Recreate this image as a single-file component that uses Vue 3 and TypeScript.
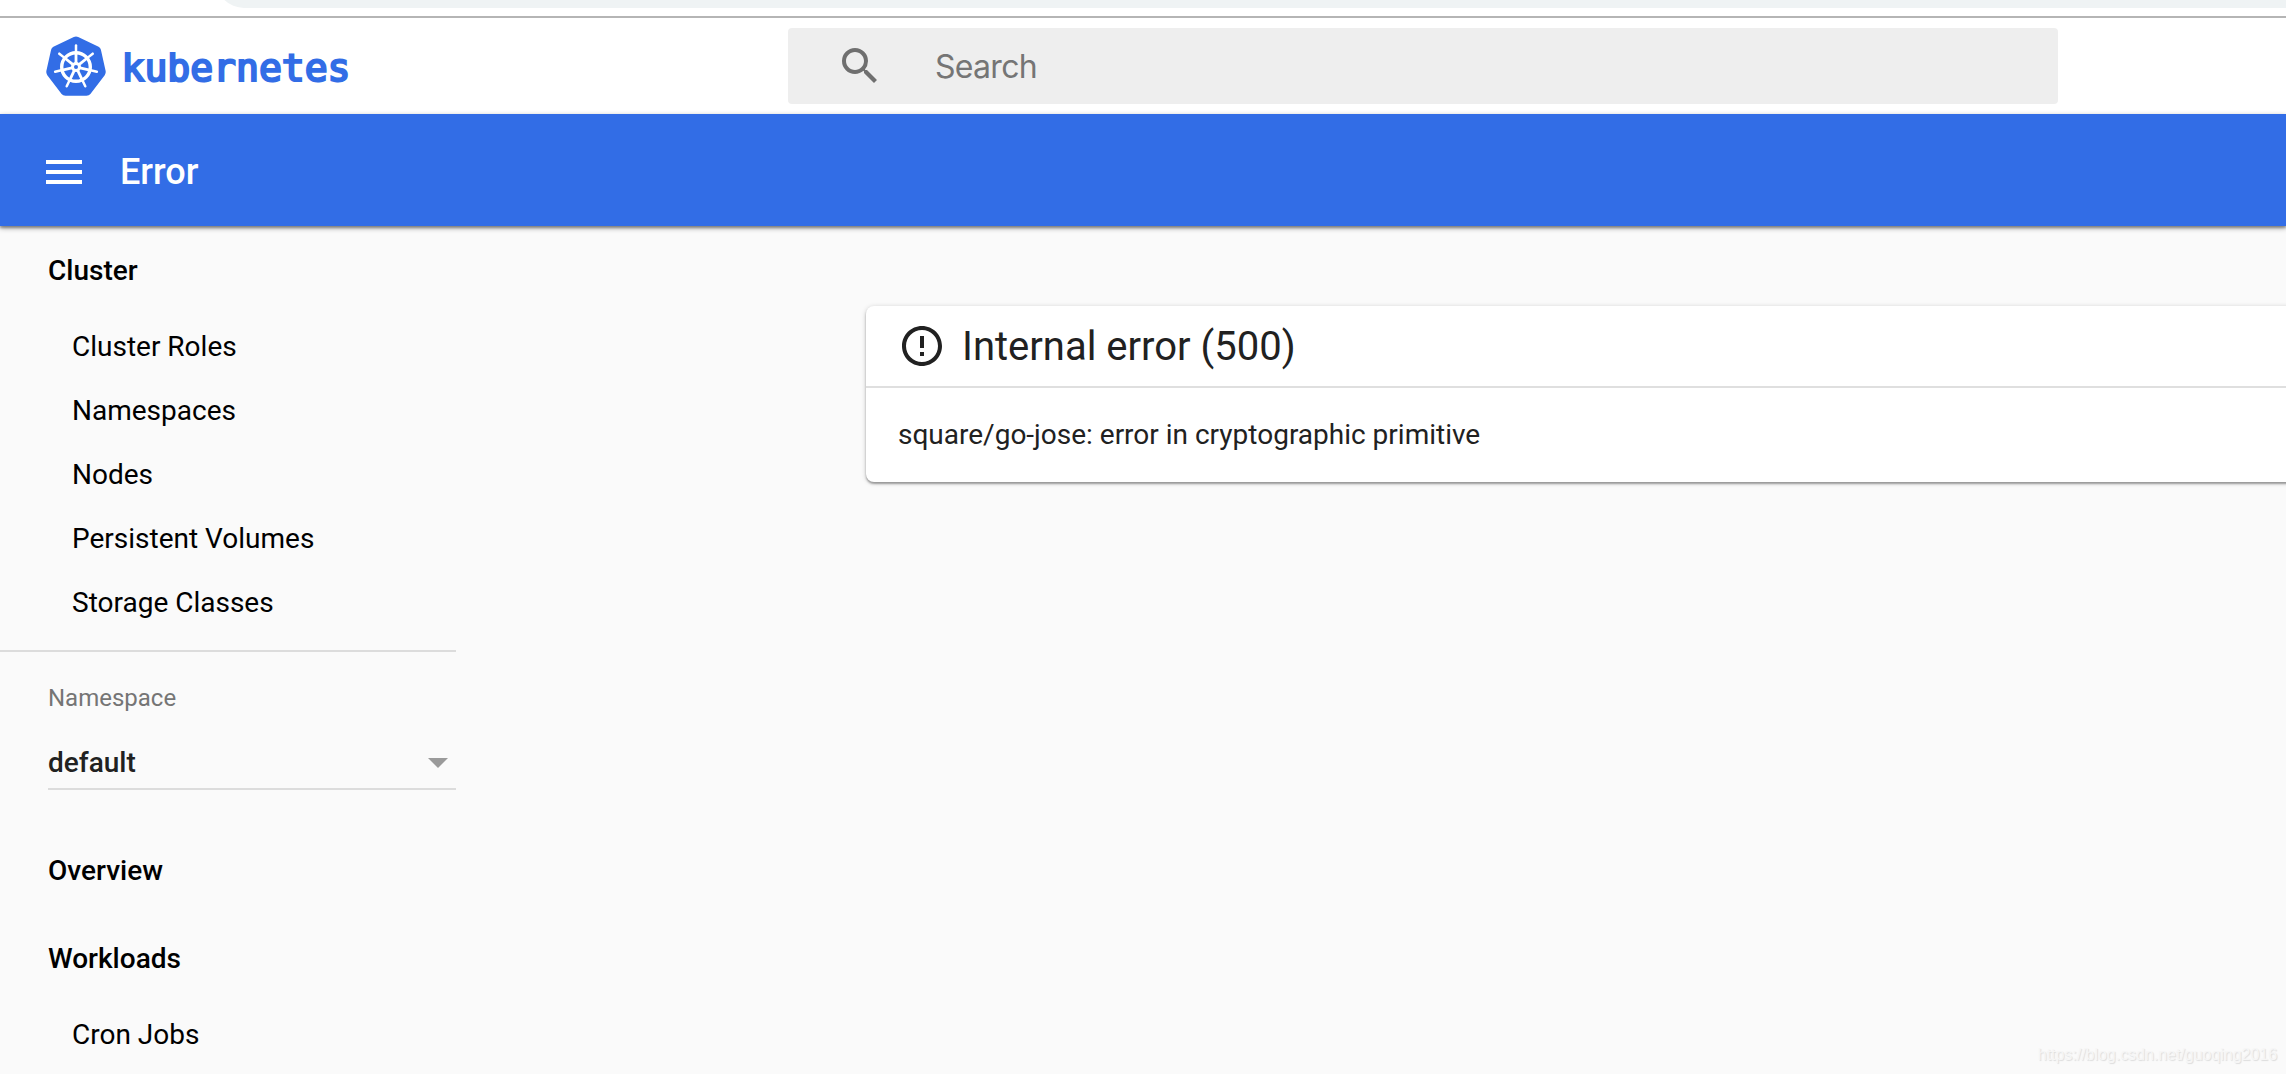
<script setup lang="ts">
import { ref } from "vue";

interface NavGroup {
  title: string;
  items: string[];
}

const clusterNav: NavGroup = {
  title: "Cluster",
  items: ["Cluster Roles", "Namespaces", "Nodes", "Persistent Volumes", "Storage Classes"],
};

const namespaceNav: NavGroup[] = [
  { title: "Overview", items: [] },
  { title: "Workloads", items: ["Cron Jobs"] },
];

const namespace = ref("default");
const query = ref("");

// the wheel has seven evenly spaced handles
const spokes = Array.from({ length: 7 }, (_, i) => (i * 360) / 7);
</script>

<template>
  <div class="page">
    <div class="browser-strip">
      <div class="omnibox"></div>
    </div>

    <header class="header">
      <a class="brand">
        <svg class="brand-mark" viewBox="0 0 60 60">
          <path
            class="mark-body"
            d="M27.8 0.9Q30 0 32.2 0.9L52.6 10.7Q54.4 11.7 54.9 13.8L59.7 35.3Q60 37.5 58.7 39.2L44.4 58Q43 59.8 40.5 59.8H19.5Q17 59.8 15.6 58L1.3 39.2Q0 37.5 0.3 35.3L5.1 13.8Q5.6 11.7 7.4 10.7Z"
          />
          <g transform="translate(30 31)">
            <circle class="mark-ring" r="14.3" />
            <g v-for="angle in spokes" :key="angle" :transform="`rotate(${angle})`">
              <path class="mark-spoke" d="M0 -3V-14" />
              <path class="mark-handle" d="M0 -15V-21.4" />
            </g>
            <circle class="mark-hub" r="5" />
            <circle class="mark-body" r="2" />
          </g>
        </svg>
        <svg class="brand-name" viewBox="0 0 230 50">
          <text x="-0.5" y="39.6" textLength="229" lengthAdjust="spacingAndGlyphs">kubernetes</text>
        </svg>
      </a>
      <div class="search">
        <svg class="icon" viewBox="0 0 24 24">
          <path
            d="M15.5 14h-.79l-.28-.27A6.471 6.471 0 0 0 16 9.5 6.5 6.5 0 1 0 9.5 16c1.61 0 3.09-.59 4.23-1.57l.27.28v.79l5 4.99L20.49 19l-4.99-5zm-6 0C7.01 14 5 11.99 5 9.5S7.01 5 9.5 5 14 7.01 14 9.5 11.99 14 9.5 14z"
          />
        </svg>
        <input v-model="query" class="search-input" type="text" placeholder="Search" />
      </div>
    </header>

    <div class="toolbar">
      <svg class="icon" viewBox="0 0 24 24">
        <path d="M3 18h18v-2H3v2zm0-5h18v-2H3v2zm0-7v2h18V6H3z" />
      </svg>
      <h1 class="toolbar-title">Error</h1>
    </div>

    <div class="body">
      <nav class="sidebar">
        <div class="group">
          <div class="group-title">{{ clusterNav.title }}</div>
          <a v-for="item in clusterNav.items" :key="item" class="nav-item">{{ item }}</a>
        </div>

        <div class="namespace">
          <label class="namespace-label">Namespace</label>
          <div class="select">
            <span>{{ namespace }}</span>
            <span class="select-arrow"></span>
          </div>
        </div>

        <div v-for="group in namespaceNav" :key="group.title" class="group">
          <div class="group-title">{{ group.title }}</div>
          <a v-for="item in group.items" :key="item" class="nav-item">{{ item }}</a>
        </div>
      </nav>

      <main class="content">
        <section class="card">
          <div class="card-header">
            <svg class="icon" viewBox="0 0 24 24">
              <path
                d="M11 15h2v2h-2zm0-8h2v6h-2zm.99-5C6.47 2 2 6.48 2 12s4.47 10 9.99 10C17.52 22 22 17.52 22 12S17.52 2 11.99 2zM12 20c-4.42 0-8-3.58-8-8s3.58-8 8-8 8 3.58 8 8-3.58 8-8 8z"
              />
            </svg>
            <h2 class="card-title">Internal error (500)</h2>
          </div>
          <p class="card-message">square/go-jose: error in cryptographic primitive</p>
        </section>
      </main>
    </div>

    <div class="watermark">https://blog.csdn.net/guoqing2016</div>
  </div>
</template>

<style>
body {
  margin: 0;
  overflow: hidden;
}
</style>

<style scoped>
.page {
  position: relative;
  display: flex;
  flex-direction: column;
  height: 1074px;
  overflow: hidden;
  background: #fafafa;
  color: #212121;
  font-family: Roboto, sans-serif;
  font-size: 28px;
}

.icon {
  flex: none;
  width: 48px;
  height: 48px;
  fill: currentColor;
}

.browser-strip {
  flex: none;
  box-sizing: border-box;
  height: 18px;
  padding-left: 216px;
  border-bottom: 2px solid #b5b5b5;
  background: #fff;
  overflow: hidden;
}

.omnibox {
  height: 48px;
  margin-top: -40px;
  border-bottom-left-radius: 28px;
  background: #eff3f4;
}

.header {
  flex: none;
  display: flex;
  align-items: center;
  height: 96px;
  background: #fff;
}

.brand {
  display: flex;
  align-items: center;
  width: 742px;
  padding-left: 46px;
}

.brand-mark {
  width: 60px;
  height: 60px;
}

.brand-name {
  width: 230px;
  height: 50px;
  margin-left: 16px;
  overflow: visible;
}

.brand-name text {
  fill: #326de6;
  stroke: #326de6;
  stroke-width: 2.2px;
  font-family: "DejaVu Sans Mono", monospace;
  font-size: 38px;
}

.mark-body {
  fill: #326de6;
}

.mark-ring {
  fill: none;
  stroke: #fff;
  stroke-width: 3.4px;
}

.mark-spoke,
.mark-handle {
  stroke: #fff;
  stroke-width: 2.8px;
}

.mark-handle {
  stroke-width: 2.5px;
  stroke-linecap: round;
}

.mark-hub {
  fill: #fff;
}

.search {
  display: flex;
  align-items: center;
  box-sizing: border-box;
  width: 1270px;
  height: 76px;
  padding-left: 48px;
  border-radius: 4px;
  background: #eee;
  color: #6f6f6f;
}

.search-input {
  flex: 1;
  margin-left: 51px;
  padding: 0;
  border: none;
  outline: none;
  background: none;
  font-family: Inter, sans-serif;
  font-size: 32px;
  letter-spacing: -0.7px;
}

.search-input::placeholder {
  color: #757575;
  opacity: 1;
}

.toolbar {
  flex: none;
  display: flex;
  align-items: center;
  height: 112px;
  padding: 4px 40px 0;
  box-sizing: border-box;
  gap: 32px;
  background: #326de6;
  box-shadow: 0 2px 5px rgba(0, 0, 0, 0.4), 0 2px 2px rgba(0, 0, 0, 0.25);
  color: #fff;
}

.toolbar-title {
  margin: 0;
  font-size: 36px;
  font-weight: 500;
}

.body {
  flex: 1;
  display: flex;
  min-height: 0;
}

.sidebar {
  flex: none;
  width: 456px;
  color: #000;
}

.group-title {
  height: 88px;
  padding-left: 48px;
  line-height: 90px;
  font-weight: 500;
}

.nav-item {
  display: block;
  height: 64px;
  padding-left: 72px;
  line-height: 66px;
}

.namespace {
  margin-bottom: 36px;
  margin-top: 16px;
  padding: 32px 0 0 48px;
  border-top: 2px solid #dcdcdc;
}

.namespace-label {
  display: block;
  height: 28px;
  line-height: 28px;
  color: #757575;
  font-size: 24px;
}

.select {
  display: flex;
  align-items: center;
  justify-content: space-between;
  height: 52px;
  margin-top: 24px;
  padding-right: 8px;
  border-bottom: 2px solid #dcdcdc;
  color: #212121;
  font-weight: 500;
}

.select-arrow {
  margin-top: 2px;
  border: 10px solid transparent;
  border-top-color: #9a9a9a;
  border-bottom: none;
}

.content {
  flex: none;
  padding: 80px 0 0 410px;
}

.card {
  width: 1500px;
  height: 176px;
  border-radius: 8px;
  background: #fff;
  box-shadow: 0 2px 2px rgba(0, 0, 0, 0.3), 0 1px 5px rgba(0, 0, 0, 0.2);
}

.card-header {
  display: flex;
  align-items: center;
  gap: 16px;
  height: 80px;
  padding-left: 32px;
  border-bottom: 2px solid #dfdfdf;
}

.card-title {
  margin: 0;
  font-size: 40px;
  font-weight: 400;
}

.card-message {
  margin: 0;
  padding: 32px;
  line-height: 30px;
}

.watermark {
  position: absolute;
  right: 9px;
  bottom: 10px;
  color: #f6f6f6;
  font-family: "Liberation Sans", sans-serif;
  font-size: 16px;
  letter-spacing: -0.03px;
  text-shadow: 1px 1px 1px #dcdcdc;
}
</style>
